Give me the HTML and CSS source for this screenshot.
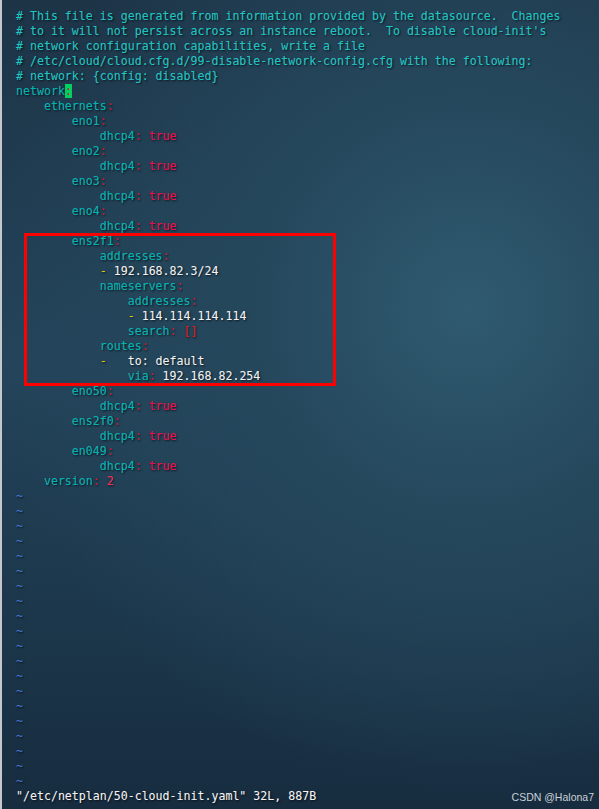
FILE: index.html
```html
<!DOCTYPE html>
<html lang="en">
<head>
    <meta charset="UTF-8">
    <meta name="viewport" content="width=device-width, initial-scale=1.0">
    <title>vim - 50-cloud-init.yaml</title>
    <link rel="stylesheet" href="styles.css">
</head>
<body>
    <div class="terminal">
        <pre class="buffer"><span class="c"># This file is generated from information provided by the datasource.  Changes</span>
<span class="c"># to it will not persist across an instance reboot.  To disable cloud-init's</span>
<span class="c"># network configuration capabilities, write a file</span>
<span class="c"># /etc/cloud/cloud.cfg.d/99-disable-network-config.cfg with the following:</span>
<span class="c"># network: {config: disabled}</span>
<span class="k">network</span><span class="cursor">:</span>
    <span class="k">ethernets</span><span class="p">:</span>
        <span class="k">eno1</span><span class="p">:</span>
            <span class="k">dhcp4</span><span class="p">:</span> <span class="b">true</span>
        <span class="k">eno2</span><span class="p">:</span>
            <span class="k">dhcp4</span><span class="p">:</span> <span class="b">true</span>
        <span class="k">eno3</span><span class="p">:</span>
            <span class="k">dhcp4</span><span class="p">:</span> <span class="b">true</span>
        <span class="k">eno4</span><span class="p">:</span>
            <span class="k">dhcp4</span><span class="p">:</span> <span class="b">true</span>
        <span class="k">ens2f1</span><span class="p">:</span>
            <span class="k">addresses</span><span class="p">:</span>
            <span class="d">-</span> <span class="v">192.168.82.3/24</span>
            <span class="k">nameservers</span><span class="p">:</span>
                <span class="k">addresses</span><span class="p">:</span>
                <span class="d">-</span> <span class="v">114.114.114.114</span>
                <span class="k">search</span><span class="p">:</span> <span class="br">[]</span>
            <span class="k">routes</span><span class="p">:</span>
            <span class="d">-</span>   <span class="v">to: default</span>
                <span class="k">via</span><span class="p">:</span> <span class="v">192.168.82.254</span>
        <span class="k">eno50</span><span class="p">:</span>
            <span class="k">dhcp4</span><span class="p">:</span> <span class="b">true</span>
        <span class="k">ens2f0</span><span class="p">:</span>
            <span class="k">dhcp4</span><span class="p">:</span> <span class="b">true</span>
        <span class="k">en049</span><span class="p">:</span>
            <span class="k">dhcp4</span><span class="p">:</span> <span class="b">true</span>
    <span class="k">version</span><span class="p">:</span> <span class="n">2</span>
<span class="t">~</span>
<span class="t">~</span>
<span class="t">~</span>
<span class="t">~</span>
<span class="t">~</span>
<span class="t">~</span>
<span class="t">~</span>
<span class="t">~</span>
<span class="t">~</span>
<span class="t">~</span>
<span class="t">~</span>
<span class="t">~</span>
<span class="t">~</span>
<span class="t">~</span>
<span class="t">~</span>
<span class="t">~</span>
<span class="t">~</span>
<span class="t">~</span>
<span class="t">~</span>
<span class="t">~</span>
<span class="v">"/etc/netplan/50-cloud-init.yaml" 32L, 887B</span></pre>
        <div class="highlight-box"></div>
        <div class="watermark">CSDN @Halona7</div>
    </div>
</body>
</html>
```

FILE: styles.css
```css
html,
body {
    margin: 0;
    padding: 0;
    height: 100%;
}
body {
    background-color: #1f3a4e;
    background-image:
        radial-gradient(ellipse 80% 60% at 78% 38%, #2f5a70 0%, #25475c 45%, rgba(31, 58, 78, 0) 100%),
        linear-gradient(180deg, #1d3447 0%, #23445a 45%, #1b3549 80%, #172c3f 100%);
    border-left: 2px solid #c4c8cc;
    box-sizing: border-box;
    overflow: hidden;
}
.terminal {
    position: relative;
    height: 809px;
}
.buffer {
    margin: 0;
    padding: 9px 0 0 14px;
    font-family: "DejaVu Sans Mono", "Liberation Mono", monospace;
    font-size: 11.6px;
    line-height: 15px;
    color: #f0f0f0;
    text-shadow: 0 0 1px rgba(255, 255, 255, 0.15), 1px 1px 2px rgba(0, 0, 0, 0.75);
}
.c {
    color: #1cc6c6; /* comments */
}
.k {
    color: #00b4b4;
}
.p {
    color: #d8102c;
}
.b {
    color: #f0084c;
}
.n {
    color: #ff2a5a;
}
.v {
    color: #f4f4f4;
}
.d {
    color: #e8c800;
}
.br {
    color: #e01818;
}
.t {
    color: #3f74d8;
}
.cursor {
    background-color: #00d060;
    color: #d4102c;
    text-shadow: none;
}
/* red annotation drawn over the ens2f1 block */
.highlight-box {
    position: absolute;
    left: 22px;
    top: 233px;
    width: 306px;
    height: 147px;
    border: 3px solid #ff0000;
}
.watermark {
    position: absolute;
    right: 5px;
    bottom: 6px;
    font-family: "Liberation Sans", Arial, sans-serif;
    font-size: 10.5px;
    color: #c8d0d8;
}
```
